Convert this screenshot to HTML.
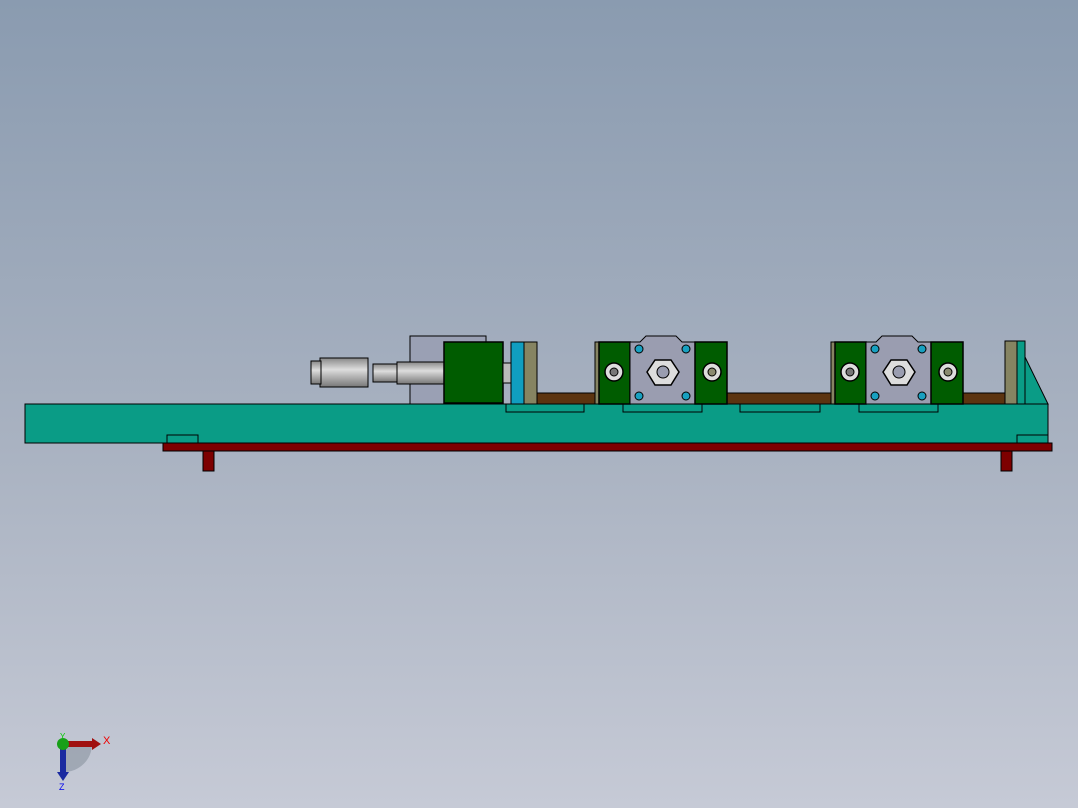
<!DOCTYPE html><html><head><style>html,body{margin:0;padding:0}body{width:1078px;height:808px;overflow:hidden;background:linear-gradient(#8a9bb0,#a9b2c1 55%,#c6cad6)}</style></head><body>
<svg width="1078" height="808" style="position:absolute;left:0;top:0" stroke="#000" stroke-width="1">
<defs><linearGradient id="cy" x1="0" y1="0" x2="0" y2="1"><stop offset="0" stop-color="#888"/><stop offset=".4" stop-color="#ddd"/><stop offset="1" stop-color="#777"/></linearGradient></defs>
<!-- base -->
<polygon points="1025,357 1048,404 1025,404" fill="#0a9c86"/>
<rect x="1017" y="341" width="8" height="63" fill="#0a9c86"/>
<rect x="1005" y="341" width="12" height="63" fill="#868462"/>
<rect x="537" y="393" width="468" height="11" fill="#5c3410"/>
<rect x="25" y="404" width="1023" height="39" fill="#0a9c86"/>
<rect x="167" y="435" width="31" height="8" fill="#0a9c86"/>
<rect x="1017" y="435" width="31" height="8" fill="#0a9c86"/>
<g fill="none"><rect x="506" y="404" width="78" height="8"/><rect x="623" y="404" width="79" height="8"/><rect x="740" y="404" width="80" height="8"/><rect x="859" y="404" width="79" height="8"/></g>
<rect x="163" y="443" width="889" height="8" fill="#7d0000"/>
<rect x="203" y="451" width="11" height="20" fill="#7d0000"/>
<rect x="1001" y="451" width="11" height="20" fill="#7d0000"/>
<!-- cylinder -->
<rect x="410" y="336" width="76" height="68" fill="#9aa0b4"/>
<rect x="373" y="364" width="71" height="18" fill="url(#cy)"/>
<rect x="397" y="362" width="47" height="22" fill="url(#cy)"/>
<rect x="320" y="358" width="48" height="29" fill="url(#cy)"/>
<rect x="311" y="361" width="10" height="23" fill="url(#cy)"/>
<rect x="444" y="342" width="59" height="61" fill="#005c00" stroke-width="1.5"/>
<rect x="503" y="363" width="8" height="20" fill="#bbb"/>
<rect x="511" y="342" width="13" height="62" fill="#109ec0"/>
<rect x="524" y="342" width="13" height="62" fill="#868462"/>
<!-- clamps -->
<g id="c">
<rect x="595" y="342" width="5" height="62" fill="#868462"/>
<rect x="599" y="342" width="31" height="62" fill="#005c00" stroke-width="1.5"/>
<path d="M630 342 H640 L646 336 H676 L682 342 H695 V404 H630Z" fill="#9a9db0"/>
<rect x="695" y="342" width="32" height="62" fill="#005c00" stroke-width="1.5"/>
<circle cx="614" cy="372" r="9" fill="#ddd" stroke-width="1.5"/><circle cx="614" cy="372" r="4" fill="#777"/>
<circle cx="712" cy="372" r="9" fill="#ddd" stroke-width="1.5"/><circle cx="712" cy="372" r="4" fill="#8a8a70"/>
<polygon points="655,360 671,360 679,372 671,385 655,385 647,372" fill="#ddd" stroke-width="1.5"/>
<circle cx="663" cy="372" r="6" fill="#9a9db0"/>
<g fill="#18a0c0"><circle cx="639" cy="349" r="4"/><circle cx="686" cy="349" r="4"/><circle cx="639" cy="396" r="4"/><circle cx="686" cy="396" r="4"/></g>
</g>
<use href="#c" transform="translate(236,0)"/>
<!-- axis -->
<g stroke="none">
<path d="M64 744 L92 744 A28 28 0 0 1 64 772Z" fill="#8892a0" opacity=".6"/>
<rect x="64" y="741" width="28" height="6" fill="#a01010"/><polygon points="92,738 101,744 92,750" fill="#a01010"/>
<rect x="60" y="744" width="6" height="28" fill="#1a2aa0"/><polygon points="57,772 63,781 69,772" fill="#1a2aa0"/>
<circle cx="63" cy="744" r="6" fill="#18a018"/>
</g>
<text x="103" y="744" fill="#e00" font-family="Liberation Sans" font-size="11" stroke="none">X</text>
<text x="59" y="790" fill="#00e" font-family="Liberation Sans" font-size="9" stroke="none">Z</text>
<text x="60" y="739" fill="#0c0" font-family="Liberation Sans" font-size="8" stroke="none">Y</text>
</svg></body></html>
